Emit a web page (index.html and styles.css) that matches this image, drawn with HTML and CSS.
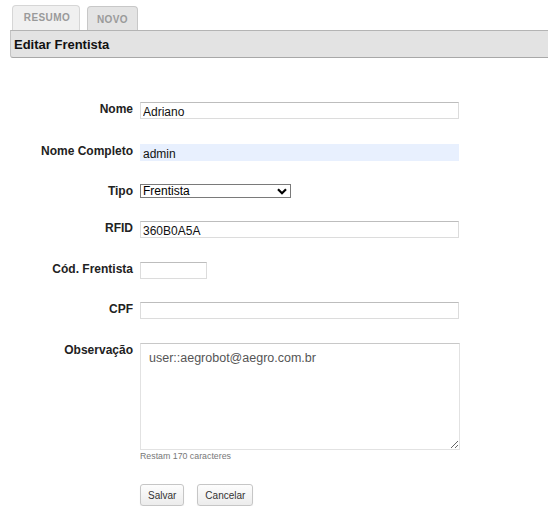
FILE: index.html
```html
<!DOCTYPE html>
<html>
<head>
<meta charset="utf-8">
<link rel="stylesheet" href="styles.css">
</head>
<body>
<div class="page">
  <div class="tabs">
    <div class="tab tab-off">RESUMO</div>
    <div class="tab tab-on">NOVO</div>
  </div>
  <div class="header">Editar Frentista</div>
  <form class="form">
    <label class="lbl">Nome</label>
    <div class="field"><input class="inp wide" type="text" value="Adriano"></div>

    <label class="lbl">Nome Completo</label>
    <div class="field"><input class="inp wide auto" type="text" value="admin"></div>

    <label class="lbl">Tipo</label>
    <div class="field">
      <div class="selwrap">
        <select class="sel"><option>Frentista</option></select>
        <svg class="chev" width="10" height="7" viewBox="0 0 10 7"><path d="M1 1.2 L5 5.2 L9 1.2" fill="none" stroke="#000" stroke-width="2.2"/></svg>
      </div>
    </div>

    <label class="lbl">RFID</label>
    <div class="field"><input class="inp wide" type="text" value="360B0A5A"></div>

    <label class="lbl">Cód. Frentista</label>
    <div class="field"><input class="inp short" type="text" value=""></div>

    <label class="lbl">CPF</label>
    <div class="field"><input class="inp wide" type="text" value=""></div>

    <label class="lbl">Observação</label>
    <div class="field">
      <textarea class="obs">user::aegrobot@aegro.com.br</textarea>
      <div class="hint">Restam 170 caracteres</div>
    </div>

    <div></div>
    <div class="actions">
      <button type="button" class="btn">Salvar</button>
      <button type="button" class="btn">Cancelar</button>
    </div>
  </form>
</div>
</body>
</html>
```
FILE: styles.css
```css
html, body {
  margin: 0;
  padding: 0;
  background: #fff;
  font-family: "Liberation Sans", Arial, sans-serif;
}
.page {
  padding-top: 5px;
}
.tabs {
  display: flex;
  align-items: flex-end;
  gap: 7px;
  padding-left: 12px;
  height: 25px;
}
.tab {
  font-size: 10px;
  font-weight: bold;
  color: #9a9a9a;
  letter-spacing: 0.4px;
  border: 1px solid #d6d6d6;
  border-bottom: none;
  border-radius: 4px 4px 0 0;
  box-sizing: border-box;
  display: flex;
  align-items: center;
  justify-content: center;
}
.tab-off {
  width: 68px;
  height: 25px;
  background: #f0f0f0;
  padding-bottom: 1px;
  padding-left: 2px;
}
.tab-on {
  width: 51px;
  height: 24px;
  background: #e4e4e4;
  border-color: #c8c8c8;
  padding-top: 1px;
}
.header {
  margin-left: 10px;
  height: 28px;
  box-sizing: border-box;
  background: #e3e3e3;
  border-top: 1px solid #b4b4b4;
  border-bottom: 1px solid #a8a8a8;
  border-left: 1px solid #c4c4c4;
  border-radius: 0 0 0 3px;
  font-size: 13px;
  font-weight: bold;
  color: #111;
  padding-left: 3px;
  display: flex;
  align-items: center;
}
.form {
  display: grid;
  grid-template-columns: 133px 320px;
  grid-template-rows: 42px 40px 37px 41px 40px 41px 141px auto;
  column-gap: 7px;
  margin-top: 44px;
}
.lbl {
  font-size: 12px;
  font-weight: bold;
  color: #222;
  text-align: right;
  line-height: 13px;
  margin-top: 1px;
}
.field {
  display: flex;
  flex-direction: column;
  align-items: flex-start;
}
.inp {
  display: block;
  box-sizing: border-box;
  height: 17px;
  border: 1px solid #dcdcdc;
  border-top-color: #bdbdbd;
  font-family: "Liberation Sans", Arial, sans-serif;
  font-size: 12px;
  color: #111;
  padding: 3px 2px 0;
  margin: 0;
  outline: none;
  background: #fff;
}
.wide { width: 319px; }
.short { width: 67px; }
.auto {
  background: #e8f0fe;
  border-color: #e8f0fe;
}
.selwrap {
  position: relative;
  width: 151px;
  height: 14px;
}
.sel {
  display: block;
  appearance: none;
  -webkit-appearance: none;
  box-sizing: border-box;
  width: 151px;
  height: 14px;
  border: 1px solid #7a7a7a;
  border-radius: 0;
  background: #fff;
  font-family: "Liberation Sans", Arial, sans-serif;
  font-size: 12px;
  color: #000;
  padding: 0 2px;
  margin: 0;
  line-height: 12px;
}
.chev {
  position: absolute;
  right: 4px;
  top: 4px;
}
.obs {
  display: block;
  box-sizing: border-box;
  width: 320px;
  height: 107px;
  border: 1px solid #e2e2e2;
  border-top-color: #c8c8c8;
  font-family: "Liberation Sans", Arial, sans-serif;
  font-size: 12.5px;
  color: #555;
  padding: 7px 8px;
  margin: 0;
  outline: none;
  resize: both;
}
.hint {
  font-size: 8.8px;
  color: #777;
  margin-top: 1px;
}
.actions {
  display: flex;
  gap: 13px;
}
.btn {
  height: 22px;
  box-sizing: border-box;
  border: 1px solid #c6c6c6;
  border-radius: 3px;
  background: linear-gradient(#fdfdfd, #ececec);
  font-family: "Liberation Sans", Arial, sans-serif;
  font-size: 10px;
  color: #333;
  padding: 0 7px;
  margin: 0;
  box-shadow: 0 1px 1px rgba(0,0,0,0.08);
}
```
